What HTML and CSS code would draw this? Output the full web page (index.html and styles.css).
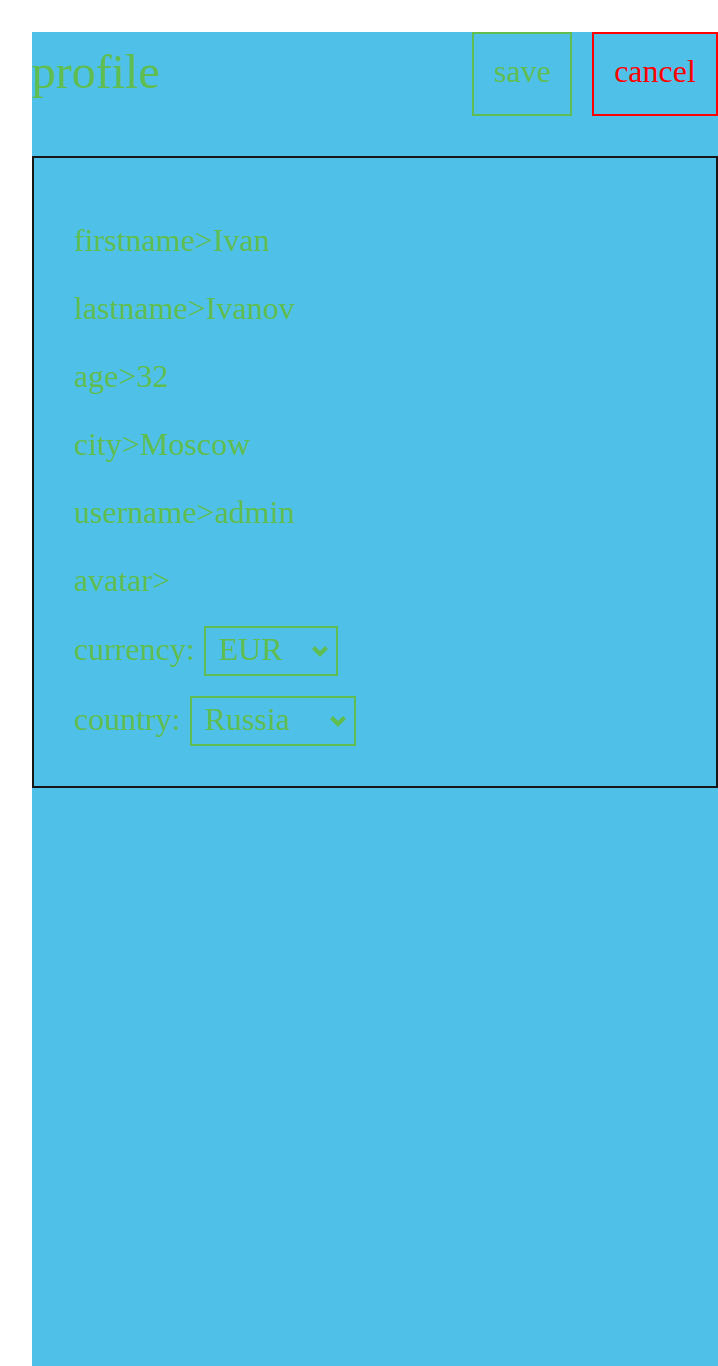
FILE: index.html
```html
<!DOCTYPE html>
<html lang="en">
<head>
<meta charset="utf-8">
<title>profile</title>
<link rel="stylesheet" href="styles.css">
</head>
<body>
<div class="app">
  <header class="header">
    <h1 class="title">profile</h1>
    <div class="actions">
      <button class="btn btn-save">save</button>
      <button class="btn btn-cancel">cancel</button>
    </div>
  </header>
  <section class="card">
    <p class="field">firstname&gt;Ivan</p>
    <p class="field">lastname&gt;Ivanov</p>
    <p class="field">age&gt;32</p>
    <p class="field">city&gt;Moscow</p>
    <p class="field">username&gt;admin</p>
    <p class="field">avatar&gt;</p>
    <label class="row row-currency">
      <span class="label">currency:</span>
      <span class="select-wrap select-currency">
        <select class="select">
          <option>EUR</option>
          <option>USD</option>
          <option>RUB</option>
        </select>
        <svg class="chevron" width="18" height="12" viewBox="0 0 18 12"><path d="M2.5 2.5 L9 9 L15.5 2.5" fill="none" stroke="#60bd50" stroke-width="4.2"/></svg>
      </span>
    </label>
    <label class="row row-country">
      <span class="label">country:</span>
      <span class="select-wrap select-country">
        <select class="select">
          <option>Russia</option>
          <option>Germany</option>
        </select>
        <svg class="chevron" width="18" height="12" viewBox="0 0 18 12"><path d="M2.5 2.5 L9 9 L15.5 2.5" fill="none" stroke="#60bd50" stroke-width="4.2"/></svg>
      </span>
    </label>
  </section>
</div>
</body>
</html>
```

FILE: styles.css
```css
html, body {
  margin: 0;
  padding: 0;
  background: #ffffff;
}

body {
  font-family: "Liberation Serif", "Times New Roman", serif;
  color: #60bd50;
}

.app {
  margin: 32px 0 0 32px;
  background: #4fc1e9;
  min-height: calc(100vh - 32px);
  box-sizing: border-box;
}

.header {
  display: flex;
  justify-content: space-between;
  align-items: flex-start;
  height: 84px;
}

.title {
  margin: 12px 0 0;
  font-size: 48px;
  font-weight: normal;
  line-height: 55px;
  color: #60bd50;
}

.actions {
  display: flex;
  gap: 20px;
}

.btn {
  font-family: "Liberation Serif", "Times New Roman", serif;
  font-size: 32px;
  line-height: 37px;
  background: transparent;
  box-sizing: border-box;
  height: 84px;
  padding: 19px 20px 24px;
  margin: 0;
  cursor: pointer;
}

.btn-save {
  width: 100px;
  border: 2px solid #60bd50;
  color: #60bd50;
}

.btn-cancel {
  width: 126px;
  border: 2px solid #ff0000;
  color: #ff0000;
}

.card {
  margin-top: 40px;
  border: 2px solid #161616;
  padding: 64px 40px 40px;
  display: flex;
  flex-direction: column;
  font-size: 32px;
}

.field {
  margin: 0 0 32px;
  line-height: 36px;
}

.field:last-of-type {
  margin-bottom: 28px;
}

.row {
  display: flex;
  align-items: flex-start;
  gap: 9px;
  height: 50px;
  line-height: 36px;
}

.label {
  padding-top: 5px;
}

.row-currency {
  margin-bottom: 20px;
}

.select-wrap {
  position: relative;
  display: block;
  height: 50px;
}

.select {
  appearance: none;
  -webkit-appearance: none;
  font-family: "Liberation Serif", "Times New Roman", serif;
  font-size: 32px;
  color: #60bd50;
  background: transparent;
  border: 2px solid #60bd50;
  border-radius: 0;
  box-sizing: border-box;
  height: 50px;
  padding: 0 13px 4px;
  margin: 0;
  line-height: 42px;
}

.select-currency .select {
  width: 134px;
}

.select-country .select {
  width: 166px;
}

.chevron {
  position: absolute;
  right: 9px;
  top: 19px;
  pointer-events: none;
}
```
